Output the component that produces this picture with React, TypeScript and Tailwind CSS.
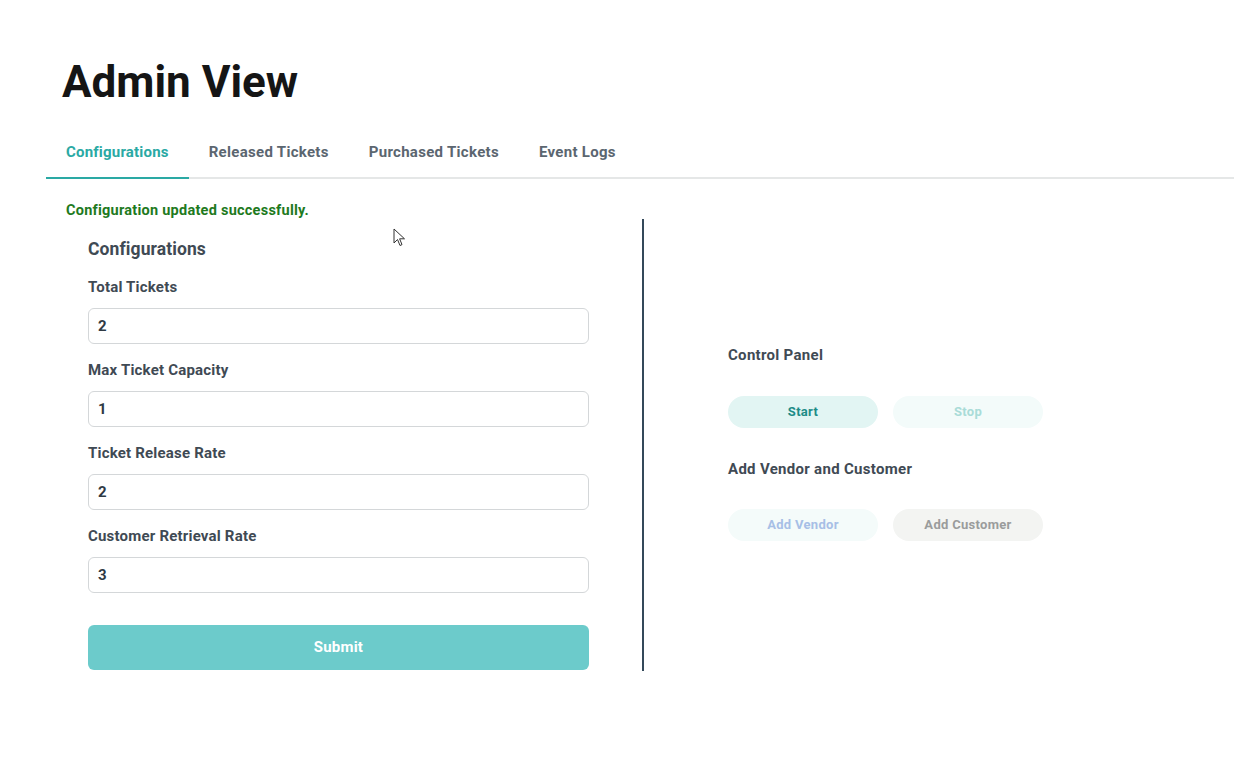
import React from 'react';

const fields = [
  { label: 'Total Tickets', value: '2' },
  { label: 'Max Ticket Capacity', value: '1' },
  { label: 'Ticket Release Rate', value: '2' },
  { label: 'Customer Retrieval Rate', value: '3' },
];

const tabs = ['Configurations', 'Released Tickets', 'Purchased Tickets', 'Event Logs'];

const Cursor = () => (
  <svg className="absolute left-[393px] top-[228px]" width="14" height="20" viewBox="0 0 14 20">
    <path d="M1 1 L1 15 L4.5 11.5 L7 17.5 L9 16.6 L6.6 10.8 L11.5 10.8 Z" fill="#fff" stroke="#333" strokeWidth="1" strokeLinejoin="round" />
  </svg>
);

export default function App() {
  return (
    <div className="relative min-h-[780px] bg-white font-['Roboto',sans-serif] text-[#3f4a54]">
      <Cursor />
      <div className="pl-[46px] pt-[58px]">
        <h1 className="pl-[16px] text-[44px] font-bold leading-[48px] tracking-[0px] text-[#151515]">Admin View</h1>
        <div className="mt-[35px] flex border-b-2 border-[#e5e7e7]">
          {tabs.map((t, i) => (
            <div
              key={t}
              className={
                i === 0
                  ? 'px-[20px] pb-[13px] -mb-[2px] border-b-2 border-[#2aa9a4] text-[15px] tracking-[0.2px] font-bold text-[#2aa9a4]'
                  : 'px-[20px] pb-[13px] text-[15px] tracking-[0.3px] font-bold text-[#5b6670]'
              }
            >
              {t}
            </div>
          ))}
        </div>
        <div className="pl-[20px] pt-[22px] text-[14.5px] tracking-[0.25px] font-bold leading-[20px] text-[#1e7a1e]">
          Configuration updated successfully.
        </div>
        <div className="-mt-[2px] flex">
          <div className="w-[598px] border-r-2 border-[#34495a] pl-[42px] pt-[17px] h-[452px]">
            <div className="w-[501px]">
              <h2 className="text-[17.5px] font-bold tracking-[0.1px] text-[#3f4a54]">Configurations</h2>
              <div className="mt-[16px] flex flex-col gap-[17px]">
                {fields.map((f) => (
                  <div key={f.label} className="flex flex-col gap-[12px]">
                    <label className="text-[15px] tracking-[0.2px] font-bold text-[#3f4a54] leading-[18px]">{f.label}</label>
                    <div className="h-[36px] rounded-md border border-[#d4d7d9] px-[9px] flex items-center text-[15px] font-bold text-[#2f3a44]">
                      {f.value}
                    </div>
                  </div>
                ))}
              </div>
              <button className="mt-[32px] h-[45px] w-full rounded-md bg-[#6ccbcb] text-[15px] tracking-[0.2px] font-bold text-white">
                Submit
              </button>
            </div>
          </div>
          <div className="flex flex-col justify-center pl-[84px] h-[452px] pb-[4px]">
            <div className="text-[15px] tracking-[0.3px] font-bold text-[#3f4a54]">Control Panel</div>
            <div className="mt-[29px] flex gap-[15px]">
              <button className="h-[32px] w-[150px] rounded-full bg-[#e2f5f3] text-[13px] tracking-[0.3px] font-bold text-[#1d8c87]">Start</button>
              <button className="h-[32px] w-[150px] rounded-full bg-[#f3fbfa] text-[13px] tracking-[0.3px] font-bold text-[#a9dcd8]">Stop</button>
            </div>
            <div className="mt-[30px] text-[15px] tracking-[0.3px] font-bold text-[#3f4a54]">Add Vendor and Customer</div>
            <div className="mt-[29px] flex gap-[15px]">
              <button className="h-[32px] w-[150px] rounded-full bg-[#f4fbfa] text-[13px] tracking-[0.3px] font-bold text-[#a7bfe6]">Add Vendor</button>
              <button className="h-[32px] w-[150px] rounded-full bg-[#f3f4f2] text-[13px] tracking-[0.3px] font-bold text-[#9a9c9c]">Add Customer</button>
            </div>
          </div>
        </div>
      </div>
    </div>
  );
}
